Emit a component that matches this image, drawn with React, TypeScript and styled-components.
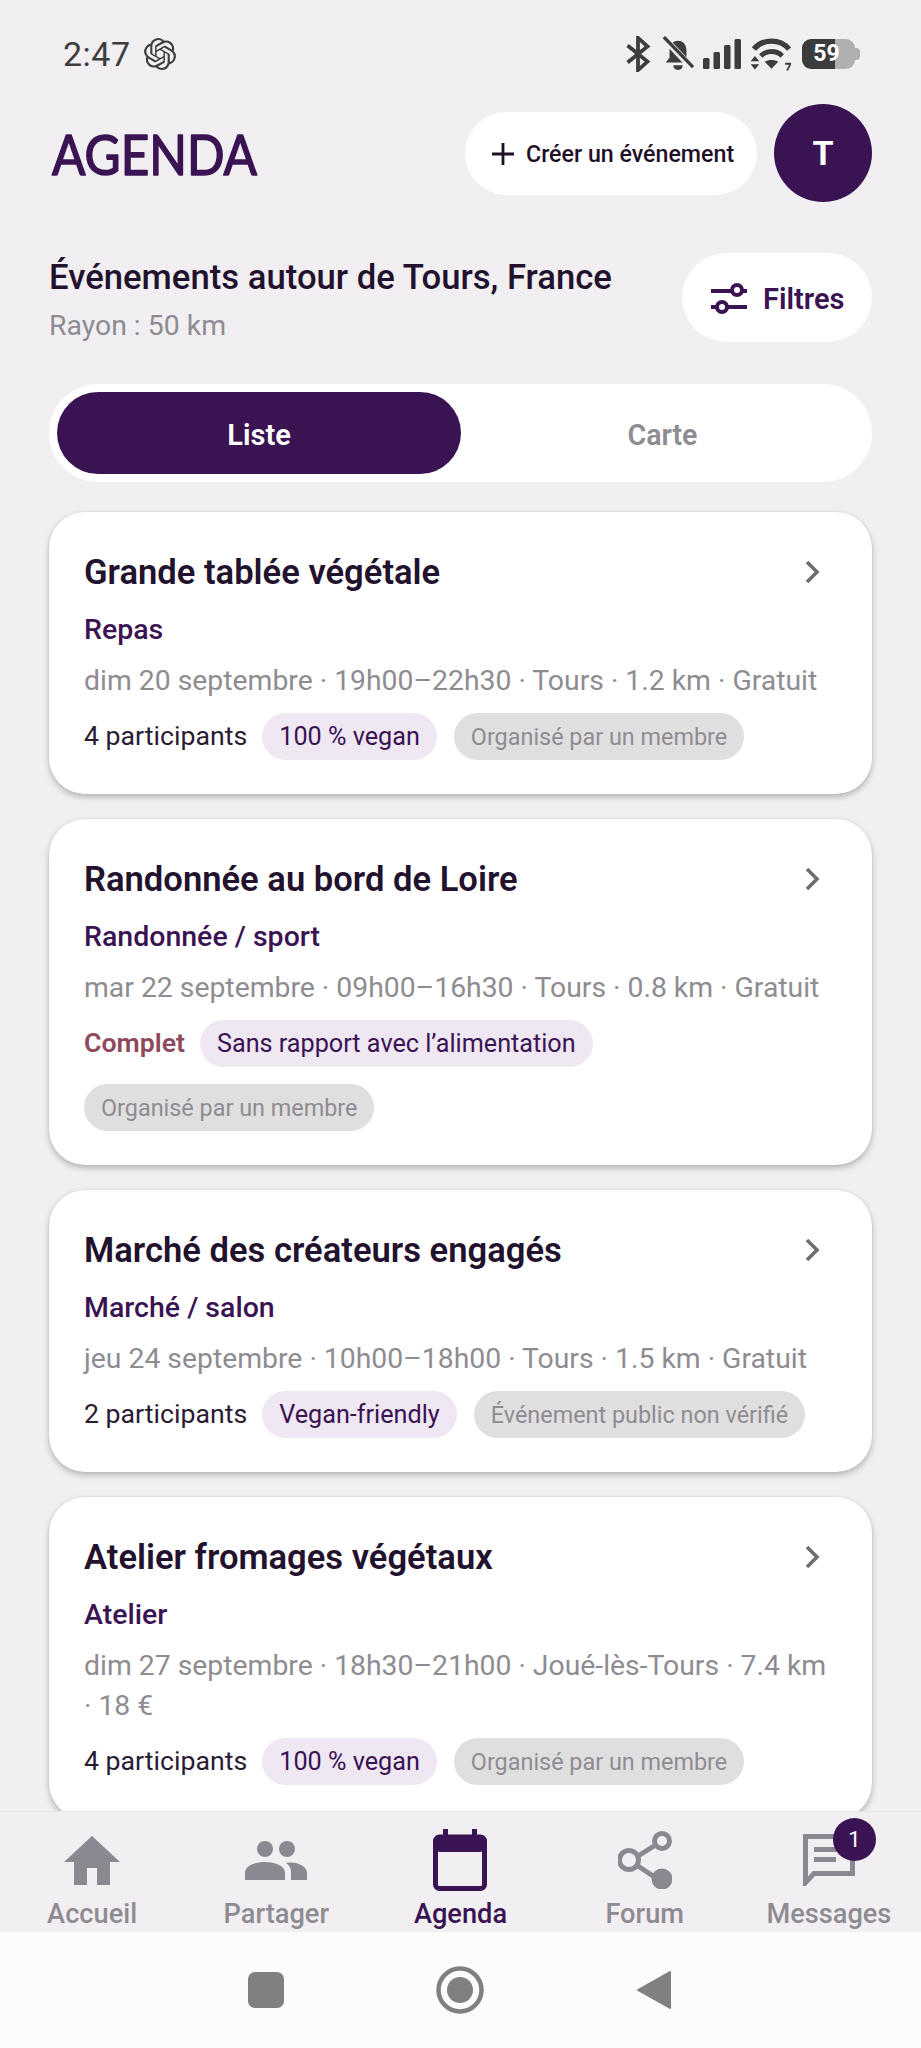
import React from "react";
import styled, { createGlobalStyle } from "styled-components";

const Global = createGlobalStyle`
  html, body { margin: 0; padding: 0; background: #f1eff1; }
  * { box-sizing: border-box; }
  body { font-family: Roboto, "Liberation Sans", sans-serif; }
`;

const Page = styled.div`
  width: 921px; height: 2048px; background: #f1eff1; overflow: hidden;
  display: flex; flex-direction: column; position: relative;
`;
const StatusBar = styled.div`
  height: 104px; flex: none; padding: 32px 60px 0 63px; display: flex; justify-content: space-between; align-items: flex-start;
  color: #3d3d3d;
`;
const StatusLeft = styled.div`
  display: flex; align-items: center; gap: 13px; height: 44px;
`;
const Time = styled.span`
  font-size: 34px; font-weight: 400; letter-spacing: 0.5px;
`;
const StatusRight = styled.div`
  display: flex; align-items: center; height: 44px;
`;
const Battery = styled.div`
  position: relative; width: 53px; height: 30px; margin: 0 6px 0 10px;
  border-radius: 9px; background: linear-gradient(90deg, #3c3c3c 0 62%, #b0b0b0 62% 100%);
  color: #fff; font: 700 23px/30px Roboto, sans-serif; text-align: center;
  padding-right: 4px;
  &::after { content: ""; position: absolute; right: -5px; top: 9px; width: 5px; height: 12px; border-radius: 0 4px 4px 0; background: #b0b0b0; }
`;
const Header = styled.div`
  flex: none; height: 98px; padding: 0 49px 0 51px; display: flex; align-items: center; gap: 17px;
`;
const Logo = styled.div`
  flex: 1; display: flex; align-items: center; height: 98px;
`;
const LogoText = styled.text`
  font-family: Lato, sans-serif; font-weight: 400; font-size: 57px;
  fill: #3a1353; stroke: #3a1353; stroke-width: 1.6px; stroke-linejoin: round; stroke-linecap: round;
`;
const CreateButton = styled.div`
  width: 292px; height: 83px; border-radius: 42px; background: #fff; display: flex; align-items: center; gap: 10px; padding: 2px 0 0 25px;
  color: #1f1028; font-size: 23.2px; font-weight: 500;
`;
const Avatar = styled.div`
  width: 98px; height: 98px; border-radius: 50%; background: #3a1353; color: #fff; font-size: 34px; font-weight: 700;
  display: flex; align-items: center; justify-content: center;
`;
const TitleRow = styled.div`
  flex: none; margin-top: 51px; padding: 0 49px; height: 89px; display: flex; justify-content: space-between; align-items: flex-start;
`;
const TitleBlock = styled.div`
  display: flex; flex-direction: column; padding-top: 1px;
`;
const PageTitle = styled.div`
  font-size: 34.7px; font-weight: 500; color: #22122d; line-height: 46px;
`;
const Radius = styled.div`
  font-size: 28.4px; color: #8e8c92; line-height: 34px; margin-top: 9px;
`;
const FilterButton = styled.div`
  width: 190px; height: 89px; border-radius: 45px; background: #fff; display: flex; align-items: center; gap: 16px; padding: 2px 0 0 29px;
  color: #3a1353; font-size: 29px; font-weight: 600;
`;
const Toggle = styled.div`
  flex: none; margin: 42px 49px 0; height: 98px; border-radius: 49px; background: #fff; padding: 8px; display: grid; grid-template-columns: 404px 1fr;
`;
const ToggleItem = styled.div<{ $active?: boolean }>`
  border-radius: 41px; display: flex; align-items: center; justify-content: center; font-size: ${(p) => (p.$active ? "29px" : "28.6px")}; font-weight: 600; padding-top: 3px;
  background: ${(p) => (p.$active ? "#3a1353" : "transparent")};
  color: ${(p) => (p.$active ? "#fff" : "#8e8c92")};
`;
const List = styled.div`
  flex: none; margin-top: 30px; padding: 0 49px; display: flex; flex-direction: column; gap: 25px;
`;
const Card = styled.div`
  position: relative; background: #fff; border-radius: 36px; padding: 37px 35px 34px; box-shadow: 0 3px 6px rgba(0,0,0,.25), 0 0 2px rgba(0,0,0,.08);
`;
const CardTitle = styled.div`
  font-size: 34.6px; font-weight: 600; color: #22122d; line-height: 46px;
`;
const Chevron = styled.div`
  position: absolute; right: 47px; top: 48px; width: 24px; height: 24px; color: #6f6d73; display: flex;
`;
const Category = styled.div`
  margin-top: 17px; font-size: 28.5px; font-weight: 500; color: #3a1353; line-height: 36px;
`;
const Meta = styled.div`
  margin-top: 13px; font-size: 28.35px; color: #8e8c92; line-height: 40px;
`;
const Tags = styled.div`
  margin-top: 12px; display: flex; flex-wrap: wrap; align-items: center; column-gap: 17px; row-gap: 17px;
`;
const Count = styled.span<{ $full?: boolean }>`
  margin-right: -2px;
  font-size: 26.7px; line-height: 47px; font-weight: ${(p) => (p.$full ? 600 : 400)}; color: ${(p) => (p.$full ? "#8e4a5c" : "#2a1c33")};
`;
const Tag = styled.span<{ $muted?: boolean }>`
  height: 47px; border-radius: 24px; padding: 0 17px; display: inline-flex; align-items: center;
  font-size: ${(p) => (p.$muted ? "23.4px" : "25.2px")};
  background: ${(p) => (p.$muted ? "#e0dfe0" : "#efe8f3")};
  color: ${(p) => (p.$muted ? "#8e8c92" : "#3a1353")};
`;
const BottomNav = styled.div`
  position: absolute; left: 0; right: 0; top: 1811px; height: 121px; background: #f1eff1; border-top: 1px solid #e7e5e7;
  display: grid; grid-template-columns: repeat(5, 1fr);
`;
const NavItem = styled.div<{ $active?: boolean }>`
  position: relative; display: flex; flex-direction: column; align-items: center; justify-content: flex-end; padding-bottom: 1px;
  font-size: 27.2px; font-weight: 500; color: ${(p) => (p.$active ? "#3a1353" : "#8e8c92")};
  line-height: 34px;
`;
const NavIcon = styled.div`
  height: 70px; margin-bottom: 2px; display: flex; align-items: center; justify-content: center;
`;
const Badge = styled.div`
  position: absolute; top: 6px; right: 45px; width: 43px; height: 43px; border-radius: 50%; background: #3a1353; color: #fff;
  font-size: 22px; font-weight: 400; display: flex; align-items: center; justify-content: center; line-height: 1;
`;
const SystemBar = styled.div`
  position: absolute; left: 0; right: 0; top: 1932px; height: 116px; background: #fcfcfc; display: flex; align-items: center; justify-content: center; padding-right: 2px;
`;
const SysSlot = styled.div`
  width: 194px; display: flex; justify-content: center;
`;

const OpenAI = () => (
  <svg width="32" height="32" viewBox="0 0 24 24" fill="#3d3d3d"><path d="M22.28 9.82a5.98 5.98 0 0 0-.52-4.91 6.05 6.05 0 0 0-6.51-2.9A6.07 6.07 0 0 0 4.98 4.18a5.98 5.98 0 0 0-4 2.9 6.05 6.05 0 0 0 .74 7.1 5.98 5.98 0 0 0 .51 4.91 6.05 6.05 0 0 0 6.52 2.9A5.98 5.98 0 0 0 13.26 24a6.06 6.06 0 0 0 5.77-4.21 5.99 5.99 0 0 0 4-2.9 6.06 6.06 0 0 0-.75-7.07zM13.26 22.43a4.48 4.48 0 0 1-2.88-1.04l.14-.08 4.78-2.76a.79.79 0 0 0 .39-.68v-6.74l2.02 1.17a.07.07 0 0 1 .04.05v5.58a4.5 4.5 0 0 1-4.49 4.5zM3.6 18.3a4.47 4.47 0 0 1-.54-3.01l.14.09 4.78 2.76a.77.77 0 0 0 .78 0l5.84-3.37v2.33a.08.08 0 0 1-.03.06L9.74 19.95a4.5 4.5 0 0 1-6.14-1.65zM2.34 7.9a4.49 4.49 0 0 1 2.37-1.97V11.6a.77.77 0 0 0 .39.68l5.81 3.35-2.02 1.17a.08.08 0 0 1-.07 0L3.99 14a4.5 4.5 0 0 1-1.65-6.1zm16.6 3.86L13.1 8.36l2.02-1.16a.08.08 0 0 1 .07 0l4.83 2.79a4.49 4.49 0 0 1-.68 8.1v-5.68a.79.79 0 0 0-.4-.66zm2.01-3.02l-.14-.09-4.77-2.78a.78.78 0 0 0-.79 0L9.41 9.23V6.9a.07.07 0 0 1 .03-.06l4.83-2.79a4.5 4.5 0 0 1 6.68 4.66zM8.31 12.86l-2.02-1.16a.08.08 0 0 1-.04-.06V6.07a4.5 4.5 0 0 1 7.38-3.45l-.14.08L8.7 5.46a.8.8 0 0 0-.39.68zm1.1-2.37l2.6-1.5 2.6 1.5v3l-2.6 1.5-2.6-1.5z"/></svg>
);
const Bluetooth = () => (
  <svg width="26" height="36" viewBox="0 0 26 38" fill="none" stroke="#3d3d3d" strokeWidth="4"><path d="M2 10l21 17-10 9V2l10 9L2 28"/></svg>
);
const BellOff = () => (
  <svg width="32" height="36" viewBox="0 0 34 38" fill="#3d3d3d" style={{ marginLeft: 11 }}><path d="M17 5c6 0 9 5 9 11v7l4 5H4l4-5v-7c0-6 3-11 9-11z"/><path d="M12 31h10c0 3-2 5-5 5s-5-2-5-5z"/><path d="M2 2l30 32" stroke="#f1eff1" strokeWidth="7"/><path d="M2 1l31 32" stroke="#3d3d3d" strokeWidth="3.5"/></svg>
);
const Signal = () => (
  <svg width="38" height="30" viewBox="0 0 38 30" fill="#3d3d3d" style={{ marginLeft: 9 }}><rect x="0" y="19" width="6.5" height="11" rx="1.5"/><rect x="10.500" y="13" width="6.5" height="17" rx="1.5"/><rect x="21" y="6" width="6.5" height="24" rx="1.5"/><rect x="31.500" y="0" width="6.5" height="30" rx="1.5"/></svg>
);
const Wifi = () => (
  <svg width="41" height="34" viewBox="0 0 42 34" fill="none" style={{ marginLeft: 10 }}><path d="M3 12C12 1 30 1 39 12" stroke="#3d3d3d" strokeWidth="5.5"/><path d="M10 19c6-6 16-6 22 0" stroke="#3d3d3d" strokeWidth="5"/><path d="M14 25c4-2.500 10-2.500 14 0l-7 7z" fill="#3d3d3d"/><path d="M4 19l4.500 5.500h-9zM4 33l4.500-5.500h-9z" fill="#3d3d3d"/><path d="M35 26h6v2l-3 6h-2l3-6h-4z" fill="#3d3d3d"/></svg>
);
const Plus = () => (
  <svg width="26" height="26" viewBox="0 0 26 26" stroke="#1f1028" strokeWidth="2.8" fill="none"><path d="M13 2v22M2 13h22"/></svg>
);
const Tune = () => (
  <svg width="36" height="34" viewBox="0 0 36 34" fill="none" stroke="#3a1353" strokeWidth="4"><path d="M0 9h21M31 9h5M0 25h6M16 25h20"/><circle cx="26" cy="8" r="5" /><circle cx="11" cy="25" r="5"/></svg>
);
const ChevronIcon = () => (
  <svg width="24" height="24" viewBox="0 0 24 24" fill="none" stroke="currentColor" strokeWidth="3.6"><path d="M6 2l10 10L6 22"/></svg>
);
const Home = () => (
  <svg width="56" height="49" viewBox="0 0 56 49" fill="#8a8890"><path d="M28 0l28 26H46v23H33V32H23v17H10V26H0z"/></svg>
);
const People = () => (
  <svg width="62" height="39" viewBox="0 0 62 39" fill="#8a8890"><circle cx="20" cy="8" r="8"/><circle cx="42" cy="8" r="8"/><path d="M0 39v-7c0-7 9-11 20-11s20 4 20 11v7z"/><path d="M46 39v-8c0-4-2-7-5-9 2-.5 3-.6 5-.6 8 0 16 4 16 11v7z"/></svg>
);
const Calendar = () => (
  <svg width="54" height="62" viewBox="0 0 54 62" fill="none"><rect x="2.500" y="8" width="49" height="51.500" rx="4" stroke="#3a1353" strokeWidth="5"/><rect x="2" y="6" width="50" height="17" rx="5" fill="#3a1353"/><rect x="10" y="0" width="5" height="10" fill="#3a1353"/><rect x="39" y="0" width="5" height="10" fill="#3a1353"/></svg>
);
const Share = () => (
  <svg width="54" height="58" viewBox="0 0 54 58" fill="none" stroke="#8a8890" strokeWidth="5"><path d="M36 15L20 25M20 35l18 12"/><circle cx="44" cy="10" r="7.500"/><circle cx="11" cy="29" r="9.500"/><circle cx="44" cy="48" r="8" fill="#8a8890"/></svg>
);
const Message = () => (
  <svg width="52" height="52" viewBox="0 0 52 52" fill="none"><path d="M2.500 2.500h47v37H11l-8.500 9z" stroke="#8a8890" strokeWidth="5"/><path d="M11 13h30v5H11zM11 23h22v5H11z" fill="#8a8890"/></svg>
);

type Ev = { title: string; cat: string; meta: string; count: string; full?: boolean; tag: string; muted: string };
const events: Ev[] = [
  { title: "Grande tablée végétale", cat: "Repas", meta: "dim 20 septembre · 19h00–22h30 · Tours · 1.2 km · Gratuit", count: "4 participants", tag: "100 % vegan", muted: "Organisé par un membre" },
  { title: "Randonnée au bord de Loire", cat: "Randonnée / sport", meta: "mar 22 septembre · 09h00–16h30 · Tours · 0.8 km · Gratuit", count: "Complet", full: true, tag: "Sans rapport avec l’alimentation", muted: "Organisé par un membre" },
  { title: "Marché des créateurs engagés", cat: "Marché / salon", meta: "jeu 24 septembre · 10h00–18h00 · Tours · 1.5 km · Gratuit", count: "2 participants", tag: "Vegan-friendly", muted: "Événement public non vérifié" },
  { title: "Atelier fromages végétaux", cat: "Atelier", meta: "dim 27 septembre · 18h30–21h00 · Joué-lès-Tours · 7.4 km · 18 €", count: "4 participants", tag: "100 % vegan", muted: "Organisé par un membre" },
];

export default function App() {
  return (
    <Page>
      <Global />
      <StatusBar>
        <StatusLeft><Time>2:47</Time><OpenAI /></StatusLeft>
        <StatusRight><Bluetooth /><BellOff /><Signal /><Wifi /><Battery>59</Battery></StatusRight>
      </StatusBar>
      <Header>
        <Logo>
          <svg width="250" height="60" viewBox="0 0 250 60">
            <LogoText x="1" y="52" textLength="205" lengthAdjust="spacingAndGlyphs">AGENDA</LogoText>
          </svg>
        </Logo>
        <CreateButton><Plus />Créer un événement</CreateButton>
        <Avatar>T</Avatar>
      </Header>
      <TitleRow>
        <TitleBlock>
          <PageTitle>Événements autour de Tours, France</PageTitle>
          <Radius>Rayon : 50 km</Radius>
        </TitleBlock>
        <FilterButton><Tune />Filtres</FilterButton>
      </TitleRow>
      <Toggle><ToggleItem $active>Liste</ToggleItem><ToggleItem>Carte</ToggleItem></Toggle>
      <List>
        {events.map((e) => (
          <Card key={e.title}>
            <CardTitle>{e.title}</CardTitle>
            <Chevron><ChevronIcon /></Chevron>
            <Category>{e.cat}</Category>
            <Meta>{e.meta}</Meta>
            <Tags>
              <Count $full={e.full}>{e.count}</Count>
              <Tag>{e.tag}</Tag>
              <Tag $muted>{e.muted}</Tag>
            </Tags>
          </Card>
        ))}
      </List>
      <BottomNav>
        <NavItem><NavIcon><Home /></NavIcon>Accueil</NavItem>
        <NavItem><NavIcon><People /></NavIcon>Partager</NavItem>
        <NavItem $active><NavIcon><Calendar /></NavIcon>Agenda</NavItem>
        <NavItem><NavIcon><Share /></NavIcon>Forum</NavItem>
        <NavItem><NavIcon><Message /></NavIcon>Messages<Badge>1</Badge></NavItem>
      </BottomNav>
      <SystemBar>
        <SysSlot><svg width="36" height="36" viewBox="0 0 36 36"><rect width="36" height="36" rx="7" fill="#808080"/></svg></SysSlot>
        <SysSlot><svg width="48" height="48" viewBox="0 0 48 48"><circle cx="24" cy="24" r="21.500" fill="none" stroke="#808080" strokeWidth="4.500"/><circle cx="24" cy="24" r="13" fill="#808080"/></svg></SysSlot>
        <SysSlot><svg width="36" height="40" viewBox="0 0 36 40"><path d="M34 2v36L2 20z" fill="#808080" stroke="#808080" strokeWidth="2" strokeLinejoin="round"/></svg></SysSlot>
      </SystemBar>
    </Page>
  );
}
